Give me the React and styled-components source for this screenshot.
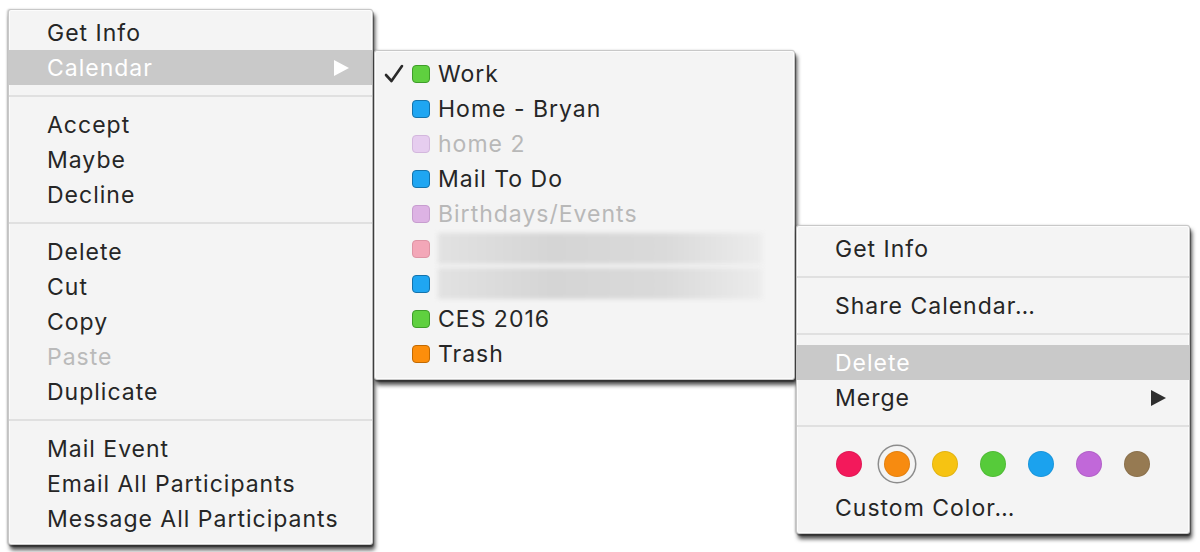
import React from "react";
import styled, { createGlobalStyle } from "styled-components";

const GlobalStyle = createGlobalStyle`
  html, body {
    margin: 0;
    padding: 0;
    background: #ffffff;
  }
  body {
    font-family: Inter, "Liberation Sans", Arial, sans-serif;
    -webkit-font-smoothing: antialiased;
  }
`;

// the three menus sit side by side, each dropped to its own height
const Stage = styled.div`
  display: flex;
  align-items: flex-start;
  gap: 1px;
  width: 1200px;
  height: 552px;
  padding-left: 8px;
  box-sizing: border-box;
  overflow: hidden;
`;

const Menu = styled.div`
  width: ${(p) => p.$width}px;
  margin-top: ${(p) => p.$top}px;
  padding: 5px 0 8px;
  box-sizing: border-box;
  background: #f4f4f4;
  border: 1px solid rgba(0, 0, 0, 0.18);
  border-radius: 3px;
  box-shadow: 2px 5px 4px rgba(0, 0, 0, 0.7), 1px 2px 1px rgba(0, 0, 0, 0.35),
    -1px 0 2px rgba(0, 0, 0, 0.22), inset 0 0 0 1px rgba(255, 255, 255, 0.7);
`;

const Item = styled.div`
  display: flex;
  align-items: center;
  justify-content: space-between;
  height: 35px;
  padding: 0 23px 0 38px;
  font-size: 23px;
  letter-spacing: 1px;
  color: ${(p) => (p.$active ? "#ffffff" : p.$disabled ? "#bababa" : "#262626")};
  background: ${(p) => (p.$active ? "#c9c9c9" : "transparent")};
`;

const Separator = styled.div`
  height: 22px;
  display: flex;
  align-items: center;

  &::after {
    content: "";
    flex: 1;
    height: 2px;
    background: #e0e0e0;
  }
`;

const Arrow = styled.span`
  width: 0;
  height: 0;
  border-top: 8px solid transparent;
  border-bottom: 8px solid transparent;
  border-left: 15px solid ${(p) => (p.$light ? "#ffffff" : "#2e2e2e")};
`;

const CalRow = styled.div`
  display: flex;
  align-items: center;
  height: 35px;
  padding-left: 9px;
  font-size: 23px;
  letter-spacing: 1px;
  color: ${(p) => (p.$disabled ? "#b8b8b8" : "#262626")};
`;

const CheckSlot = styled.span`
  width: 28px;
  height: 22px;
  display: flex;
  align-items: center;
`;

const Square = styled.span`
  width: 18px;
  height: 18px;
  margin-right: 8px;
  border-radius: 4px;
  box-sizing: border-box;
  background: ${(p) => p.$color};
  border: 1.5px solid ${(p) => p.$edge};
  flex-shrink: 0;
`;

const Blurred = styled.span`
  width: 324px;
  height: 31px;
  background: linear-gradient(90deg, #e2e2e2 0%, #d5d5d5 35%, #dadada 70%, #ececec 100%);
  filter: blur(2px);
`;

const SwatchRow = styled.div`
  display: flex;
  align-items: center;
  gap: 22px;
  height: 53px;
  padding-left: 39px;
`;

const Swatch = styled.span`
  width: 26px;
  height: 26px;
  border-radius: 50%;
  box-sizing: border-box;
  background: ${(p) => p.$color};
  border: 1px solid rgba(0, 0, 0, 0.08);
  box-shadow: ${(p) => (p.$selected ? "0 0 0 5px #f4f4f4, 0 0 0 6.5px #8c8c8c" : "none")};
`;

const Check = () => (
  <svg width="20" height="20" viewBox="0 0 20 20">
    <path d="M2 11 L7.5 17 L18 2" fill="none" stroke="#2a2a2a" strokeWidth="2.6" strokeLinecap="round" strokeLinejoin="round" />
  </svg>
);

const calendars = [
  { name: "Work", color: "#5fd03f", edge: "#3f9d2a", checked: true },
  { name: "Home - Bryan", color: "#1fa6f2", edge: "#1473ac" },
  { name: "home 2", color: "#e6cdef", edge: "#d3b7dd", disabled: true },
  { name: "Mail To Do", color: "#1fa6f2", edge: "#1473ac" },
  { name: "Birthdays/Events", color: "#ddb3e4", edge: "#c79dcf", disabled: true },
  { color: "#f3a7b8", edge: "#de94a4", hidden: true },
  { color: "#1fa6f2", edge: "#1473ac", hidden: true },
  { name: "CES 2016", color: "#5fd03f", edge: "#3f9d2a" },
  { name: "Trash", color: "#fd8e0b", edge: "#c26a02" },
];

const swatches = ["#f3195b", "#f78b10", "#f6c312", "#56cb3a", "#1ba2ee", "#c168d9", "#967a52"];

export default function App() {
  return (
    <>
      <GlobalStyle />
      <Stage>
        <Menu $width={365} $top={9}>
          <Item>Get Info</Item>
          <Item $active>
            Calendar
            <Arrow $light />
          </Item>
          <Separator />
          <Item>Accept</Item>
          <Item>Maybe</Item>
          <Item>Decline</Item>
          <Separator />
          <Item>Delete</Item>
          <Item>Cut</Item>
          <Item>Copy</Item>
          <Item $disabled>Paste</Item>
          <Item>Duplicate</Item>
          <Separator />
          <Item>Mail Event</Item>
          <Item>Email All Participants</Item>
          <Item>Message All Participants</Item>
        </Menu>

        <Menu $width={421} $top={50}>
          {calendars.map((c, i) => (
            <CalRow key={i} $disabled={c.disabled}>
              <CheckSlot>{c.checked && <Check />}</CheckSlot>
              <Square $color={c.color} $edge={c.edge} />
              {c.hidden ? <Blurred /> : c.name}
            </CalRow>
          ))}
        </Menu>

        <Menu $width={394} $top={225}>
          <Item>Get Info</Item>
          <Separator />
          <Item>Share Calendar…</Item>
          <Separator />
          <Item $active>Delete</Item>
          <Item>
            Merge
            <Arrow />
          </Item>
          <Separator />
          <SwatchRow>
            {swatches.map((s, i) => (
              <Swatch key={s} $color={s} $selected={i === 1} />
            ))}
          </SwatchRow>
          <Item>Custom Color…</Item>
        </Menu>
      </Stage>
    </>
  );
}
